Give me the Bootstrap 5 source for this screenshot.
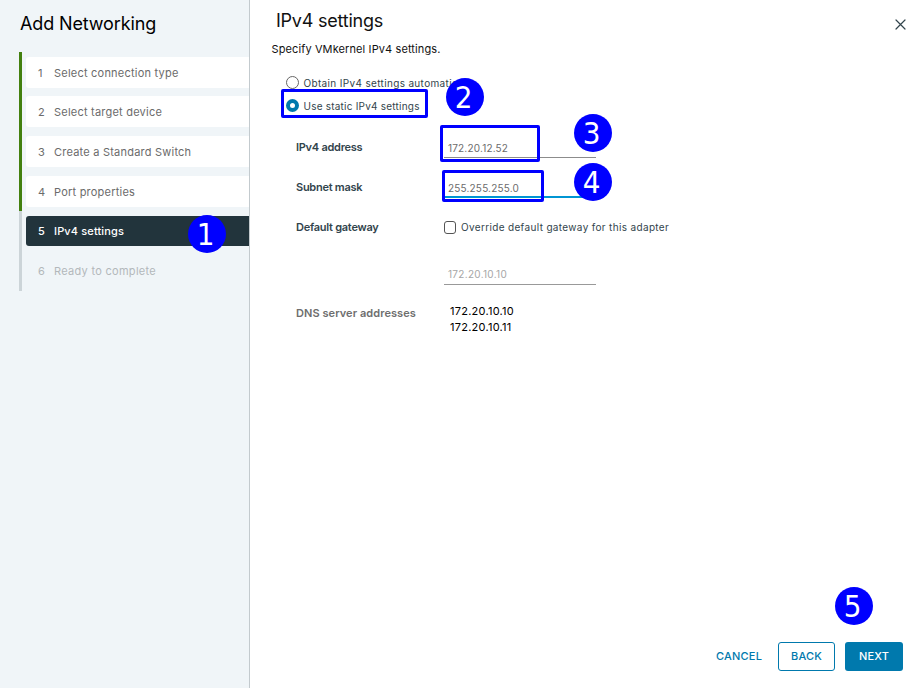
<!DOCTYPE html>
<html lang="en">
<head>
<meta charset="utf-8">
<title>Add Networking</title>
<link href="https://cdn.jsdelivr.net/npm/bootstrap@5.3.0/dist/css/bootstrap.min.css" rel="stylesheet">
<style>
body{font-family:Inter,"Liberation Sans",sans-serif;font-size:11px;line-height:16px;color:#111}
.wizard{height:688px}
.side{width:250px;background:#f0f5f8;border-right:1px solid #c3cace}
.side h1{font-size:18px;line-height:24px;padding:12px 0 0 20px;height:52px;font-weight:400;color:#000;letter-spacing:-.13px}
.step{height:39.75px;margin-left:19px;padding:4.5px 0 4.5px 4px;border-left:3px solid #ccd4d8}
.step.done{border-color:#43800f}
.step-box{width:223px;height:31px;border-radius:3px 0 0 3px;padding:1px 0 0 12px;color:#6b6b6b;letter-spacing:.22px}
.done .step-box{background:#fff}
.now .step-box{background:#22343c;color:#fff;font-weight:500;height:30px;letter-spacing:.14px}
.later .step-box{color:#b3b8bb;letter-spacing:.29px}
.num{width:16px}
.pane h2{font-size:18px;line-height:24px;font-weight:400;color:#111;margin:9px 0 0 26px;letter-spacing:-.23px}
.intro{margin:8px 0 0 21.5px;letter-spacing:.11px}
.close-x{left:895px;top:19px;width:11px;height:11px}
.opts{margin:14px 0 0 36px;color:#32444c;font-size:10px}
.opt{height:23px;letter-spacing:.34px}
.opt.picked{letter-spacing:.22px}
.dot{width:13px;height:13px;border:1px solid #666;border-radius:50%;margin-right:4.5px}
.dot.on{border:4.5px solid #0079ad}
.fields{margin:22px 0 0 46px}
.form-line{height:40px}
.form-line.gateway{height:46px}
.lab{width:148px;font-weight:600;color:#32444c;letter-spacing:-.26px}
.lab.muted{color:#6e6e6e;letter-spacing:.07px}
.field{width:152px;border-bottom:1px solid #8c8c8c;padding:1px 4px 0;font-size:10px;color:#6b6b6b;height:19px;letter-spacing:.18px}
.field.focus{border-bottom:2px solid #0095d3}
.field.off{color:#a6a6a6;border-color:#999;letter-spacing:.3px;height:20px}
.override{height:16px;font-size:10px;color:#32444c;letter-spacing:.34px}
.chk{width:12px;height:13px;border:1px solid #555;border-radius:3px;margin-right:5px}
.dns{padding-left:6px;letter-spacing:.25px;color:#000;margin-top:-2px}
.foot{padding:0 16px 17px 0}
.wbtn{--bs-btn-color:#0079ad;--bs-btn-border-radius:3px;--bs-btn-font-size:11px;--bs-btn-font-weight:500;--bs-btn-line-height:1;height:29px;padding:0;letter-spacing:.2px}
.wbtn.text{width:47px;margin-right:16px}
.wbtn.line{--bs-btn-border-color:#0079ad;width:57px;margin-right:10px}
.wbtn.fill{--bs-btn-bg:#0079ad;--bs-btn-color:#fff;width:58px}
.frame{border:3px solid #00f;border-radius:2px}
.frame-radio{left:281px;top:89px;width:147px;height:29px}
.frame-ip{left:440px;top:125px;width:100px;height:37px}
.frame-mask{left:442px;top:170px;width:102px;height:32px}
.pin{width:38px;height:38px;border-radius:50%;background:#00f;color:#fff;font:31px/38px "DejaVu Sans Condensed","DejaVu Sans",sans-serif;text-align:center;padding-right:3px}
.pin-1{left:188px;top:215px}
.pin-2{left:446px;top:78px}
.pin-3{left:574px;top:114px}
.pin-4{left:574px;top:163px}
.pin-5{left:835px;top:587px}
</style>
</head>
<body>
<div class="wizard d-flex position-relative overflow-hidden">
<aside class="side flex-shrink-0">
<h1 class="m-0">Add Networking</h1>
<div class="step done"><div class="step-box d-flex align-items-center"><span class="num">1</span>Select connection type</div></div>
<div class="step done"><div class="step-box d-flex align-items-center"><span class="num">2</span>Select target device</div></div>
<div class="step done"><div class="step-box d-flex align-items-center"><span class="num">3</span>Create a Standard Switch</div></div>
<div class="step done"><div class="step-box d-flex align-items-center"><span class="num">4</span>Port properties</div></div>
<div class="step now"><div class="step-box d-flex align-items-center"><span class="num">5</span>IPv4 settings</div></div>
<div class="step later"><div class="step-box d-flex align-items-center"><span class="num">6</span>Ready to complete</div></div>
</aside>
<main class="pane flex-grow-1 d-flex flex-column">
<h2>IPv4 settings</h2>
<p class="intro mb-0">Specify VMkernel IPv4 settings.</p>
<div class="opts">
<div class="opt d-flex align-items-center"><span class="dot"></span>Obtain IPv4 settings automatically</div>
<div class="opt picked d-flex align-items-center"><span class="dot on"></span>Use static IPv4 settings</div>
</div>
<div class="fields">
<div class="form-line d-flex"><div class="lab">IPv4 address</div><div class="field">172.20.12.52</div></div>
<div class="form-line d-flex"><div class="lab">Subnet mask</div><div class="field focus">255.255.255.0</div></div>
<div class="form-line gateway d-flex"><div class="lab">Default gateway</div><div class="override d-flex align-items-center"><span class="chk"></span>Override default gateway for this adapter</div></div>
<div class="form-line d-flex"><div class="lab"></div><div class="field off">172.20.10.10</div></div>
<div class="form-line d-flex"><div class="lab muted">DNS server addresses</div><div class="dns">172.20.10.10<br>172.20.10.11</div></div>
</div>
<div class="foot d-flex justify-content-end mt-auto">
<button type="button" class="btn wbtn text">CANCEL</button>
<button type="button" class="btn wbtn line">BACK</button>
<button type="button" class="btn wbtn fill">NEXT</button>
</div>
</main>
<svg class="close-x position-absolute" viewBox="0 0 11 11" fill="none" stroke="#32444c" stroke-width="1.2" stroke-linecap="round"><path d="M1 1l9 9M10 1l-9 9"/></svg>
<div class="frame frame-radio position-absolute"></div>
<div class="frame frame-ip position-absolute"></div>
<div class="frame frame-mask position-absolute"></div>
<div class="pin pin-1 position-absolute">1</div>
<div class="pin pin-2 position-absolute">2</div>
<div class="pin pin-3 position-absolute">3</div>
<div class="pin pin-4 position-absolute">4</div>
<div class="pin pin-5 position-absolute">5</div>
</div>
<script src="https://cdn.jsdelivr.net/npm/bootstrap@5.3.0/dist/js/bootstrap.bundle.min.js"></script>
</body>
</html>
